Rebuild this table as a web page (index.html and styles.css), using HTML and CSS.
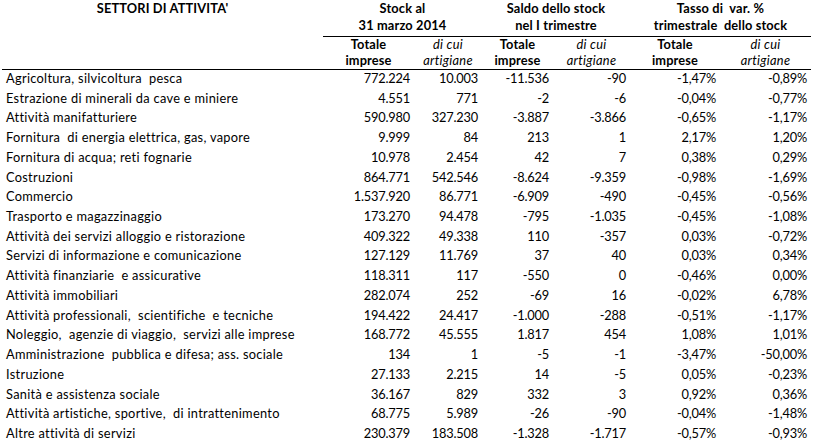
FILE: index.html
```html
<!DOCTYPE html>
<html lang="it">
<head>
<meta charset="utf-8">
<title>Stock imprese per settore</title>
<link rel="stylesheet" href="styles.css">
</head>
<body>
<table class="stock">
  <colgroup>
    <col class="c-label">
    <col class="c-91">
    <col class="c-68">
    <col class="c-71">
    <col class="c-77">
    <col class="c-90">
    <col class="c-91">
  </colgroup>
  <thead>
    <tr class="hrow-a">
      <th class="h-label" rowspan="2">SETTORI DI ATTIVITA'</th>
      <th class="h-grp" colspan="2">Stock al<br>31 marzo 2014</th>
      <th class="h-grp" colspan="2">Saldo dello stock<br>nel I trimestre</th>
      <th class="h-grp h-grp-tasso" colspan="2"><span class="grp-block">Tasso di  var. %<br>trimestrale  dello stock</span></th>
    </tr>
    <tr class="hrow-b">
      <th class="h-tot">Totale<br>imprese</th>
      <th class="h-art">di cui<br>artigiane</th>
      <th class="h-tot">Totale<br>imprese</th>
      <th class="h-art">di cui<br>artigiane</th>
      <th class="h-tot">Totale<br>imprese</th>
      <th class="h-art">di cui<br>artigiane</th>
    </tr>
  </thead>
  <tbody>
    <tr><td>Agricoltura, silvicoltura  pesca</td><td>772.224</td><td>10.003</td><td>-11.536</td><td>-90</td><td>-1,47%</td><td>-0,89%</td></tr>
    <tr><td>Estrazione di minerali da cave e miniere</td><td>4.551</td><td>771</td><td>-2</td><td>-6</td><td>-0,04%</td><td>-0,77%</td></tr>
    <tr><td>Attività manifatturiere</td><td>590.980</td><td>327.230</td><td>-3.887</td><td>-3.866</td><td>-0,65%</td><td>-1,17%</td></tr>
    <tr><td>Fornitura  di energia elettrica, gas, vapore</td><td>9.999</td><td>84</td><td>213</td><td>1</td><td>2,17%</td><td>1,20%</td></tr>
    <tr><td>Fornitura di acqua; reti fognarie</td><td>10.978</td><td>2.454</td><td>42</td><td>7</td><td>0,38%</td><td>0,29%</td></tr>
    <tr><td>Costruzioni</td><td>864.771</td><td>542.546</td><td>-8.624</td><td>-9.359</td><td>-0,98%</td><td>-1,69%</td></tr>
    <tr><td>Commercio</td><td>1.537.920</td><td>86.771</td><td>-6.909</td><td>-490</td><td>-0,45%</td><td>-0,56%</td></tr>
    <tr><td>Trasporto e magazzinaggio</td><td>173.270</td><td>94.478</td><td>-795</td><td>-1.035</td><td>-0,45%</td><td>-1,08%</td></tr>
    <tr><td>Attività dei servizi alloggio e ristorazione</td><td>409.322</td><td>49.338</td><td>110</td><td>-357</td><td>0,03%</td><td>-0,72%</td></tr>
    <tr><td>Servizi di informazione e comunicazione</td><td>127.129</td><td>11.769</td><td>37</td><td>40</td><td>0,03%</td><td>0,34%</td></tr>
    <tr><td>Attività finanziarie  e assicurative</td><td>118.311</td><td>117</td><td>-550</td><td>0</td><td>-0,46%</td><td>0,00%</td></tr>
    <tr><td>Attività immobiliari</td><td>282.074</td><td>252</td><td>-69</td><td>16</td><td>-0,02%</td><td>6,78%</td></tr>
    <tr><td>Attività professionali,  scientifiche  e tecniche</td><td>194.422</td><td>24.417</td><td>-1.000</td><td>-288</td><td>-0,51%</td><td>-1,17%</td></tr>
    <tr><td>Noleggio,  agenzie di viaggio,  servizi alle imprese</td><td>168.772</td><td>45.555</td><td>1.817</td><td>454</td><td>1,08%</td><td>1,01%</td></tr>
    <tr><td>Amministrazione  pubblica e difesa; ass. sociale</td><td>134</td><td>1</td><td>-5</td><td>-1</td><td>-3,47%</td><td>-50,00%</td></tr>
    <tr><td>Istruzione</td><td>27.133</td><td>2.215</td><td>14</td><td>-5</td><td>0,05%</td><td>-0,23%</td></tr>
    <tr><td>Sanità e assistenza sociale</td><td>36.167</td><td>829</td><td>332</td><td>3</td><td>0,92%</td><td>0,36%</td></tr>
    <tr><td>Attività artistiche, sportive,  di intrattenimento</td><td>68.775</td><td>5.989</td><td>-26</td><td>-90</td><td>-0,04%</td><td>-1,48%</td></tr>
    <tr><td>Altre attività di servizi</td><td>230.379</td><td>183.508</td><td>-1.328</td><td>-1.717</td><td>-0,57%</td><td>-0,93%</td></tr>
  </tbody>
</table>
</body>
</html>
```
FILE: styles.css
```css
html, body {
  margin: 0;
  padding: 0;
  background: #ffffff;
  overflow: hidden;
}

body {
  font-family: "Lato", "Open Sans", sans-serif;
  font-size: 12.8px;
  color: #000000;
}

.stock {
  table-layout: fixed;
  width: 809px;
  margin-left: 2px;
  border-collapse: separate;
  border-spacing: 0;
}

.c-label { width: 321px; }
.c-91 { width: 91px; }
.c-68 { width: 68px; }
.c-71 { width: 71px; }
.c-77 { width: 77px; }
.c-90 { width: 90px; }

.stock th,
.stock td {
  padding: 0 4px;
  vertical-align: top;
  white-space: pre;
}

.stock th {
  font-weight: 700;
  letter-spacing: 0.15px;
  text-align: center;
}

.hrow-a th {
  line-height: 17px;
  padding-bottom: 2px;
}

.h-label {
  padding-top: 0;
  border-bottom: 1px solid #000000;
}

.h-grp {
  border-bottom: 1px solid #000000;
}

.h-grp-tasso {
  text-align: right;
  padding-right: 25px;
}

.grp-block {
  display: inline-block;
  text-align: center;
}

.hrow-b th {
  line-height: 15.5px;
  padding-bottom: 1px;
  border-bottom: 1px solid #000000;
}

.hrow-b .h-art {
  font-weight: 400;
  font-style: italic;
  letter-spacing: 0.3px;
}

.stock td {
  line-height: 16px;
  padding-bottom: 3.72px;
  text-align: right;
  letter-spacing: -0.2px;
}

.stock td:first-child {
  text-align: left;
  letter-spacing: 0.3px;
}
```
